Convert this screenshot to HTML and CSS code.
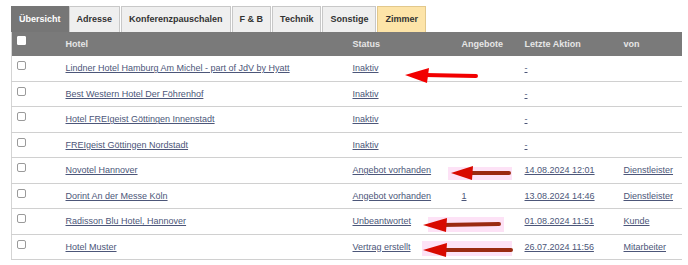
FILE: index.html
```html
<!DOCTYPE html>
<html lang="de">
<head>
  <meta charset="UTF-8" />
  <title>Hotelanfragen</title>
  <link rel="stylesheet" href="styles.css">
</head>
<body>
  <div class="page">
    <div class="tabs">
      <span class="tab active">Übersicht</span>
      <span class="tab">Adresse</span>
      <span class="tab">Konferenzpauschalen</span>
      <span class="tab">F &amp; B</span>
      <span class="tab">Technik</span>
      <span class="tab">Sonstige</span>
      <span class="tab rooms">Zimmer</span>
    </div>

    <table class="list">
      <colgroup>
        <col class="c-check"><col class="c-hotel"><col class="c-status"><col class="c-offers"><col class="c-last"><col class="c-by">
      </colgroup>
      <thead>
        <tr>
          <th><input type="checkbox" class="cb cb-head"></th>
          <th>Hotel</th>
          <th>Status</th>
          <th>Angebote</th>
          <th>Letzte Aktion</th>
          <th>von</th>
        </tr>
      </thead>
      <tbody>
        <tr>
          <td><input type="checkbox" class="cb"></td>
          <td><a href="#">Lindner Hotel Hamburg Am Michel - part of JdV by Hyatt</a></td>
          <td><a href="#">Inaktiv</a></td>
          <td></td>
          <td><a href="#">-</a></td>
          <td></td>
        </tr>
        <tr>
          <td><input type="checkbox" class="cb"></td>
          <td><a href="#">Best Western Hotel Der Föhrenhof</a></td>
          <td><a href="#">Inaktiv</a></td>
          <td></td>
          <td><a href="#">-</a></td>
          <td></td>
        </tr>
        <tr>
          <td><input type="checkbox" class="cb"></td>
          <td><a href="#">Hotel FREIgeist Göttingen Innenstadt</a></td>
          <td><a href="#">Inaktiv</a></td>
          <td></td>
          <td><a href="#">-</a></td>
          <td></td>
        </tr>
        <tr>
          <td><input type="checkbox" class="cb"></td>
          <td><a href="#">FREIgeist Göttingen Nordstadt</a></td>
          <td><a href="#">Inaktiv</a></td>
          <td></td>
          <td><a href="#">-</a></td>
          <td></td>
        </tr>
        <tr>
          <td><input type="checkbox" class="cb"></td>
          <td><a href="#">Novotel Hannover</a></td>
          <td><a href="#">Angebot vorhanden</a></td>
          <td></td>
          <td><a href="#">14.08.2024 12:01</a></td>
          <td><a href="#">Dienstleister</a></td>
        </tr>
        <tr>
          <td><input type="checkbox" class="cb"></td>
          <td><a href="#">Dorint An der Messe Köln</a></td>
          <td><a href="#">Angebot vorhanden</a></td>
          <td><a href="#">1</a></td>
          <td><a href="#">13.08.2024 14:46</a></td>
          <td><a href="#">Dienstleister</a></td>
        </tr>
        <tr>
          <td><input type="checkbox" class="cb"></td>
          <td><a href="#">Radisson Blu Hotel, Hannover</a></td>
          <td><a href="#">Unbeantwortet</a></td>
          <td></td>
          <td><a href="#">01.08.2024 11:51</a></td>
          <td><a href="#">Kunde</a></td>
        </tr>
        <tr>
          <td><input type="checkbox" class="cb"></td>
          <td><a href="#">Hotel Muster</a></td>
          <td><a href="#">Vertrag erstellt</a></td>
          <td><a href="#" class="under-mark">2</a></td>
          <td><a href="#">26.07.2024 11:56</a></td>
          <td><a href="#">Mitarbeiter</a></td>
        </tr>
      </tbody>
    </table>
  </div>

  <!-- red arrows drawn over the screenshot -->
  <svg class="marks" width="688" height="265" viewBox="0 0 688 265">
    <rect x="448" y="167" width="64" height="13" fill="#fde2f6"/>
    <rect x="428" y="217" width="76" height="15" fill="#fde2f6"/>
    <rect x="422" y="241" width="90" height="15" fill="#fde2f6"/>

    <line x1="425" y1="75" x2="476" y2="76" stroke="#f20000" stroke-width="4" stroke-linecap="round"/>
    <polygon points="405,75 429,68 427,83" fill="#f20000"/>

    <line x1="468" y1="173" x2="509" y2="173" stroke="#9a2a10" stroke-width="4" stroke-linecap="round"/>
    <polygon points="451,173 473,166 472,180" fill="#d80a00"/>

    <line x1="442" y1="225" x2="499" y2="224" stroke="#9a2a10" stroke-width="4" stroke-linecap="round"/>
    <polygon points="423,225 447,218 446,232" fill="#d80a00"/>

    <line x1="442" y1="250" x2="511" y2="250" stroke="#9a2a10" stroke-width="4" stroke-linecap="round"/>
    <polygon points="423,250 447,243 446,257" fill="#d80a00"/>
  </svg>
</body>
</html>
```

FILE: styles.css
```css
body {
  margin: 0;
  font-family: "Liberation Sans", Arial, sans-serif;
  font-size: 9px;
  color: #333;
  background: #fff;
}
.page {
  padding: 6px 0 0 11px;
}
.tabs {
  display: flex;
}
.tab {
  height: 25px;
  line-height: 25px;
  padding: 0 7px;
  margin-right: 1px;
  border: 1px solid #c8c8c8;
  border-bottom: none;
  background: #efefef;
  font-weight: bold;
  font-size: 9px;
  color: #333;
}
.tab.active {
  background: #767676;
  border-color: #767676;
  color: #fff;
  margin-right: 0;
}
.tab.rooms {
  background: #fde4a8;
  border-color: #e2c88c;
}
.list {
  width: 670px;
  border-collapse: collapse;
  table-layout: fixed;
  border-left: 1px solid #d4d4d4;
}
.c-check { width: 49px; }
.c-hotel { width: 287px; }
.c-status { width: 109px; }
.c-offers { width: 63px; }
.c-last { width: 99px; }
.c-by { width: 63px; }
.list th {
  background: #7a7a7a;
  color: #e6e6e6;
  font-weight: bold;
  text-align: left;
  height: 24px;
  padding: 0 5px;
}
.list td {
  height: 24.5px;
  padding: 0 5px;
  border-bottom: 1px solid #d0d0d0;
  white-space: nowrap;
}
.list a {
  color: #4c5679;
  text-decoration: underline;
}
.list a.under-mark {
  color: #d88a9a;
}
.cb {
  appearance: none;
  width: 9px;
  height: 9px;
  margin: 0;
  border: 1px solid #9a9a9a;
  border-radius: 2px;
  background: #fff;
  vertical-align: -1px;
  position: relative;
  top: -2px;
}
.cb-head {
  border-color: #fff;
  border-radius: 1px;
  top: -3px;
}
.marks {
  position: absolute;
  top: 0;
  left: 0;
  pointer-events: none;
}
```
